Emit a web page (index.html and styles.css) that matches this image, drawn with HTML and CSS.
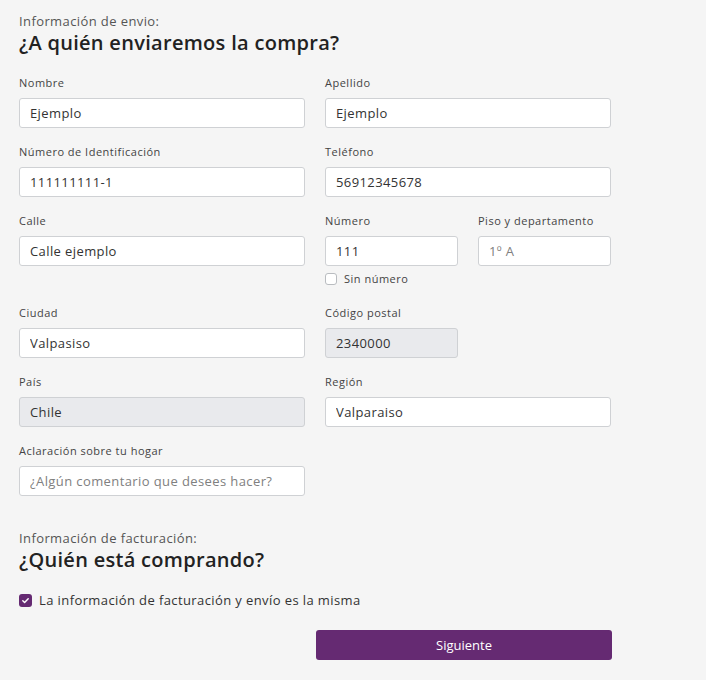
FILE: index.html
```html
<!DOCTYPE html>
<html>
<head>
  <meta charset="UTF-8">
  <title>Información de envío</title>
  <meta name="viewport" content="width=device-width, initial-scale=1.0"/>
  <link rel="stylesheet" href="styles.css">
</head>
<body>
  <div class="checkout">
    <p class="eyebrow">Información de envio:</p>
    <h2 class="title">¿A quién enviaremos la compra?</h2>

    <form class="grid">
      <div class="field wide">
        <label>Nombre</label>
        <input type="text" value="Ejemplo">
      </div>
      <div class="field wide">
        <label>Apellido</label>
        <input type="text" value="Ejemplo">
      </div>

      <div class="field wide">
        <label>Número de Identificación</label>
        <input type="text" value="111111111-1">
      </div>
      <div class="field wide">
        <label>Teléfono</label>
        <input type="text" value="56912345678">
      </div>

      <div class="field wide">
        <label>Calle</label>
        <input type="text" value="Calle ejemplo">
      </div>
      <div class="field">
        <label>Número</label>
        <input type="text" value="111">
        <label class="check small"><span class="box"></span>Sin número</label>
      </div>
      <div class="field">
        <label>Piso y departamento</label>
        <input type="text" placeholder="1º A">
      </div>

      <div class="field wide">
        <label>Ciudad</label>
        <input type="text" value="Valpasiso">
      </div>
      <div class="field">
        <label>Código postal</label>
        <input type="text" value="2340000" disabled>
      </div>
      <div class="field"></div>

      <div class="field wide">
        <label>País</label>
        <input type="text" value="Chile" disabled>
      </div>
      <div class="field wide">
        <label>Región</label>
        <input type="text" value="Valparaiso">
      </div>

      <div class="field wide">
        <label>Aclaración sobre tu hogar</label>
        <input type="text" placeholder="¿Algún comentario que desees hacer?">
      </div>
    </form>

    <p class="eyebrow billing">Información de facturación:</p>
    <h2 class="title">¿Quién está comprando?</h2>

    <label class="check same">
      <span class="box on">
        <svg width="9" height="9" viewBox="0 0 10 10"><path d="M2 5.2l2 2 4-4.2" fill="none" stroke="#fff" stroke-width="1.6" stroke-linecap="round" stroke-linejoin="round"/></svg>
      </span>
      La información de facturación y envío es la misma
    </label>

    <button type="button" class="next">Siguiente</button>
  </div>
</body>
</html>
```

FILE: styles.css
```css
body { margin: 0; background: #f5f5f5; font-family: "Open Sans", "Noto Sans", sans-serif; color: #333; letter-spacing: 0.4px; }
.checkout { width: 592px; padding: 12px 0 20px 19px; }
.eyebrow { margin: 0; font-size: 13px; line-height: 18px; color: #555; }
.title { margin: 0; font-size: 20px; line-height: 26px; font-weight: 600; color: #222; letter-spacing: 0.3px; }
.grid { display: grid; grid-template-columns: repeat(4, 133px); column-gap: 20px; row-gap: 16px; margin-top: 19px; }
.field { display: flex; flex-direction: column; }
.field.wide { grid-column: span 2; }
.field label { font-size: 11px; line-height: 16px; color: #444; margin-bottom: 7px; letter-spacing: 0.5px; }
.field input { box-sizing: border-box; height: 30px; width: 100%; padding: 0 10px; border: 1px solid #cfd1d4; border-radius: 3px; background: #fff; font-family: inherit; font-size: 13px; color: #333; letter-spacing: 0.4px; }
.field input::placeholder { color: #808080; }
.field input:disabled { background: #e9eaed; color: #333; }
.check { display: flex; align-items: center; gap: 7px; color: #333; }
.field .check.small { margin: 5px 0 2px; font-size: 11px; line-height: 16px; }
.box { box-sizing: border-box; width: 12px; height: 12px; border: 1px solid #b9bcc0; border-radius: 3px; background: #fff; display: inline-flex; align-items: center; justify-content: center; }
.box.on { width: 13px; height: 13px; border: none; background: #652a72; }
.billing { margin-top: 33px; }
.same { margin-top: 18px; font-size: 13px; line-height: 18px; }
.next { display: block; margin: 21px 0 0 297px; width: 296px; height: 30px; border: none; border-radius: 3px; background: #652a72; color: #fff; font-family: inherit; font-size: 13px; cursor: pointer; }
.next:hover { background: #55225f; }
```
